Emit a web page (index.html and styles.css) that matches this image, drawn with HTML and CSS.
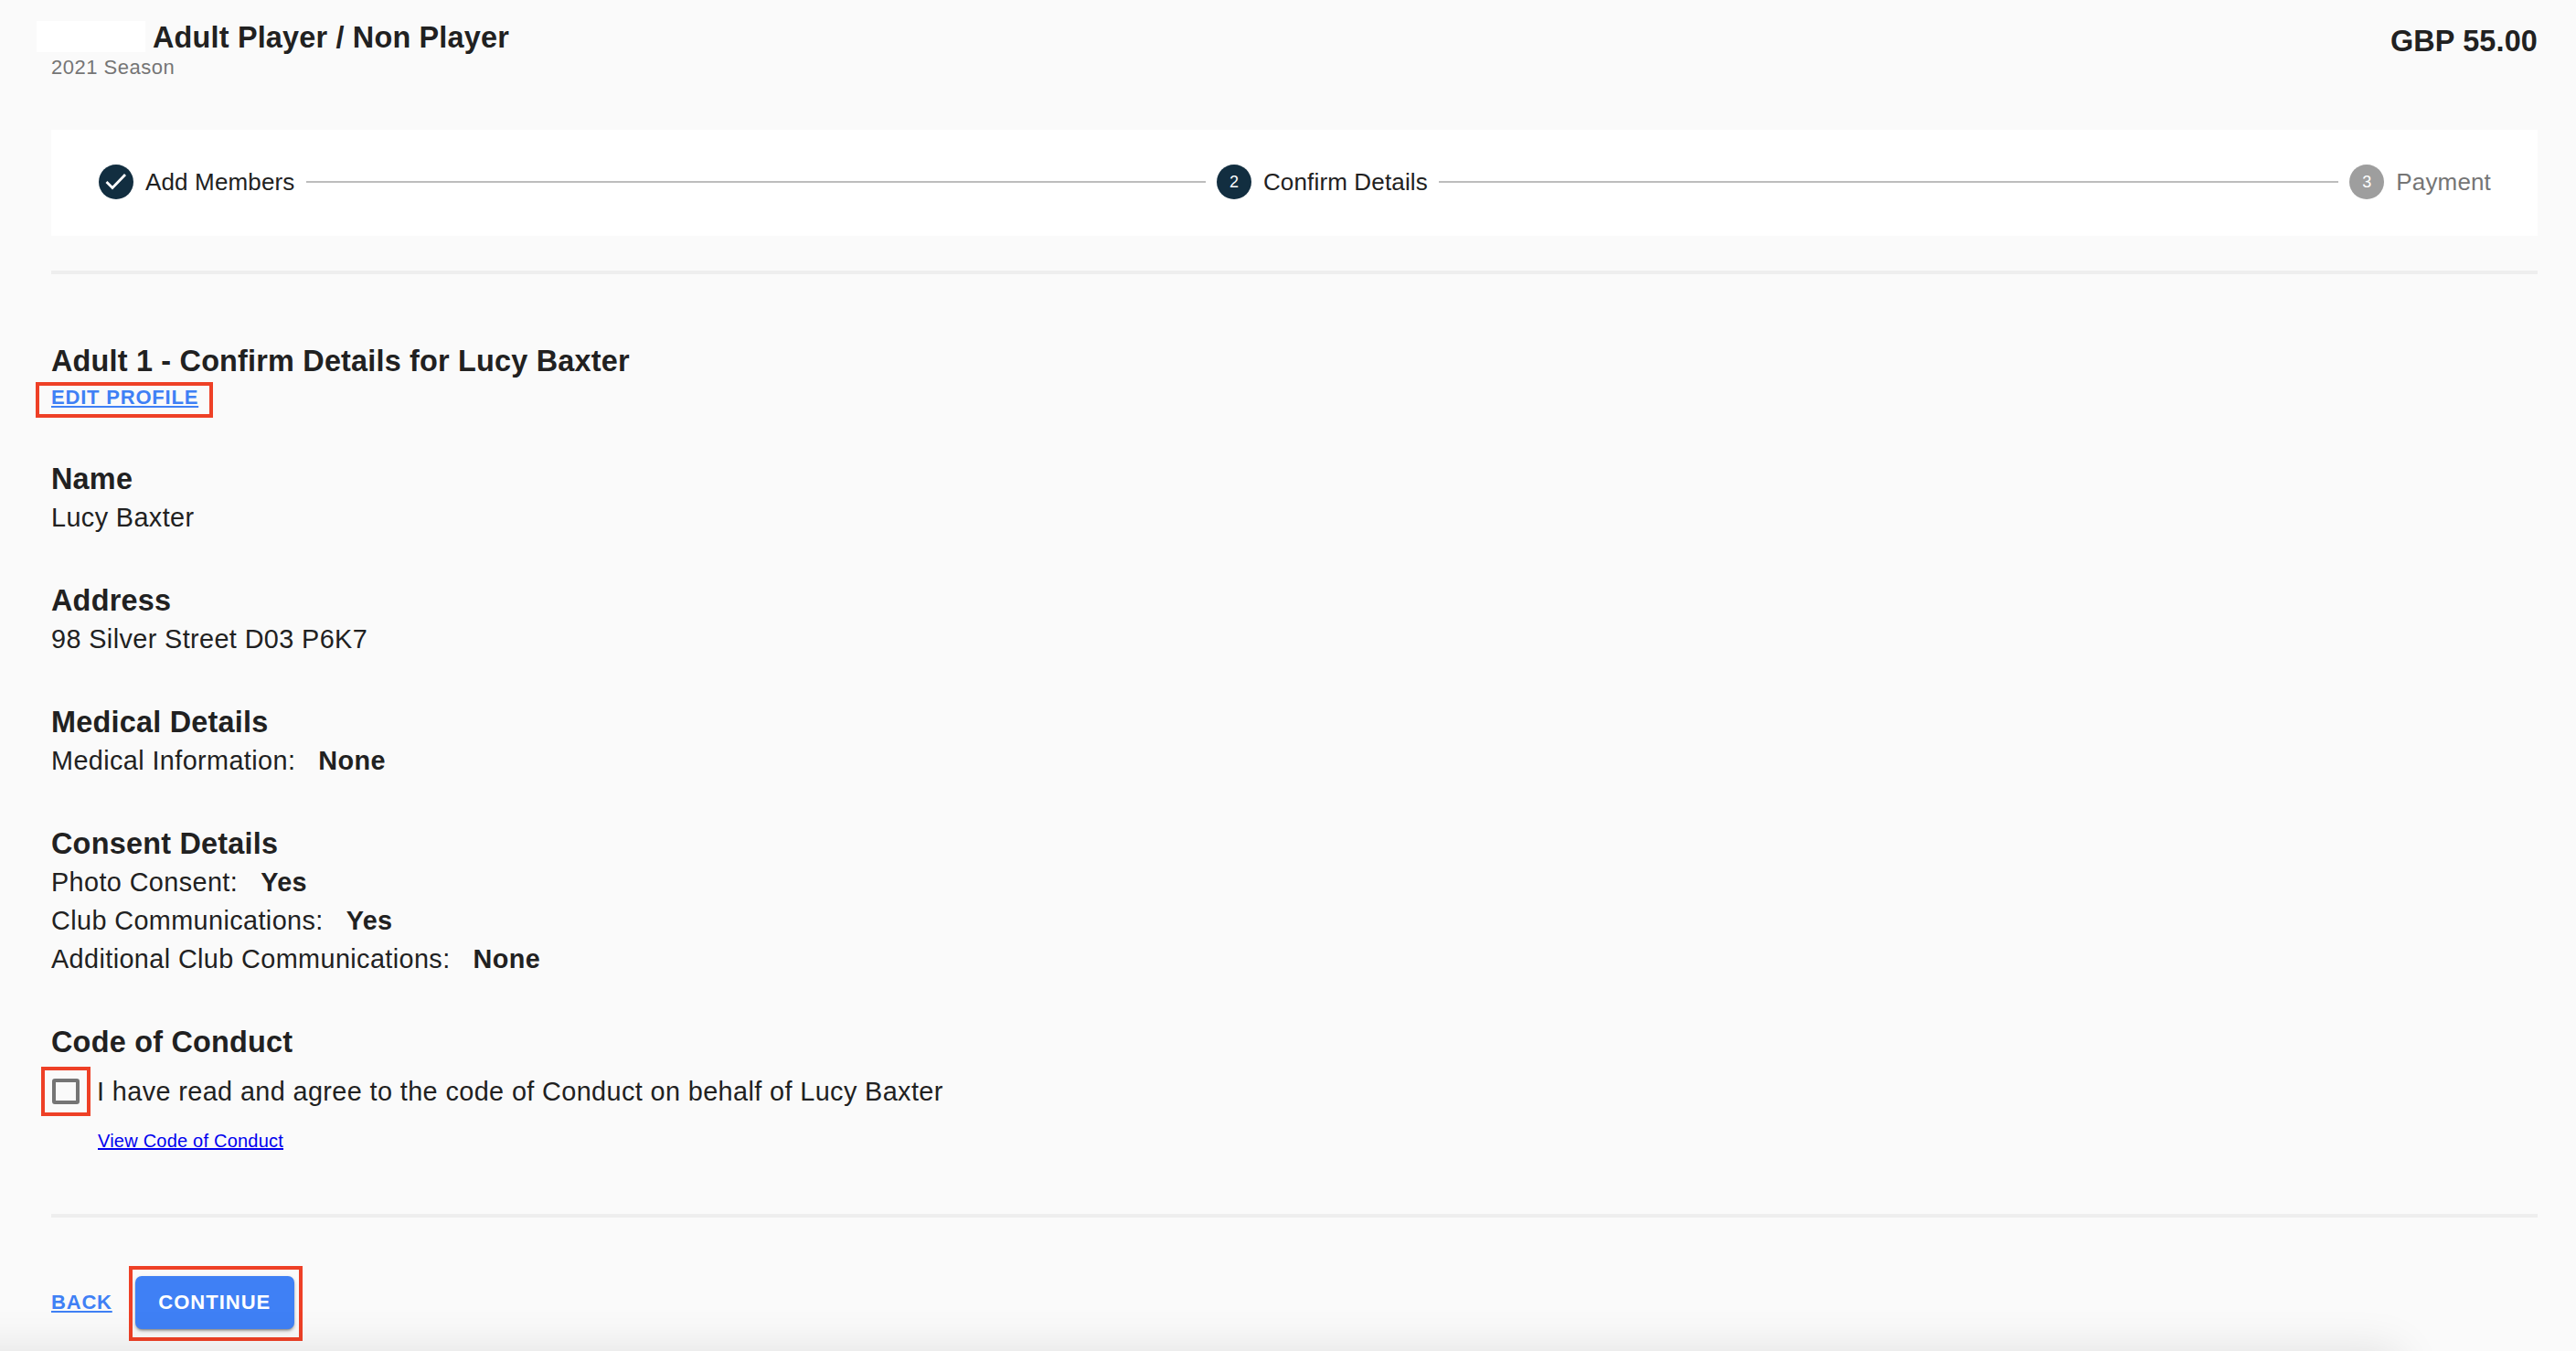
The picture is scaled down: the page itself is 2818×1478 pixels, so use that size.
FILE: index.html
```html
<!DOCTYPE html>
<html lang="en">
<head>
<meta charset="utf-8">
<title>Confirm Details</title>
<link rel="stylesheet" href="styles.css">
</head>
<body>
<main class="page">
  <header class="top">
    <div class="top-left">
      <div class="title-row">
        <div class="logo-blank"></div>
        <h1 class="title">Adult Player / Non Player</h1>
      </div>
      <div class="season">2021 Season</div>
    </div>
    <div class="price">GBP 55.00</div>
  </header>

  <nav class="stepper">
    <div class="step">
      <span class="step-icon">
        <svg viewBox="0 0 38 38" width="38" height="38"><path d="M8.5 19l6.5 6.5L29 11" fill="none" stroke="#fff" stroke-width="2.8"/></svg>
      </span>
      <span class="step-label">Add Members</span>
    </div>
    <div class="step-line"></div>
    <div class="step">
      <span class="step-icon">2</span>
      <span class="step-label">Confirm Details</span>
    </div>
    <div class="step-line"></div>
    <div class="step step-off">
      <span class="step-icon">3</span>
      <span class="step-label">Payment</span>
    </div>
  </nav>
  <div class="rule rule-top"></div>

  <h2 class="lead">Adult 1 - Confirm Details for Lucy Baxter</h2>
  <a class="action-link edit marked" href="#">EDIT PROFILE</a>

  <section class="block block-first">
    <h3 class="head">Name</h3>
    <p class="line">Lucy Baxter</p>
  </section>
  <section class="block">
    <h3 class="head">Address</h3>
    <p class="line">98 Silver Street D03 P6K7</p>
  </section>
  <section class="block">
    <h3 class="head">Medical Details</h3>
    <p class="line">Medical Information:<b class="val">None</b></p>
  </section>
  <section class="block">
    <h3 class="head">Consent Details</h3>
    <p class="line">Photo Consent:<b class="val">Yes</b></p>
    <p class="line">Club Communications:<b class="val">Yes</b></p>
    <p class="line">Additional Club Communications:<b class="val">None</b></p>
  </section>
  <section class="block">
    <h3 class="head">Code of Conduct</h3>
    <div class="agree">
      <span class="check marked"></span>
      <span class="line">I have read and agree to the code of Conduct on behalf of Lucy Baxter</span>
    </div>
    <a class="view" href="#">View Code of Conduct</a>
  </section>

  <div class="rule rule-bottom"></div>
  <div class="actions">
    <a class="action-link" href="#">BACK</a>
    <button class="primary marked" type="button">CONTINUE</button>
  </div>
</main>
<div class="bottom-shadow"></div>
</body>
</html>
```
FILE: styles.css
```css
* { box-sizing: border-box; }
html, body { margin: 0; height: 100%; overflow: hidden; }
body {
  background: #fafafa;
  color: #212121;
  font-family: "Liberation Sans", Arial, sans-serif;
}
.page { padding: 0 42px 0 56px; }
h1, h2, h3, p { margin: 0; }

.top { display: flex; justify-content: space-between; align-items: flex-start; padding-top: 23px; height: 142px; }
.title-row { display: flex; align-items: flex-start; margin-left: -16px; height: 34px; }
.logo-blank { width: 119px; height: 34px; background: #fff; margin-right: 8px; }
.title { font-size: 32.4px; line-height: 36px; font-weight: 700; letter-spacing: .19px; }
.season { font-size: 22px; line-height: 28px; color: #757575; margin-top: 3px; letter-spacing: .5px; }
.price { font-size: 32.4px; line-height: 36px; font-weight: 700; margin-top: 4px; letter-spacing: .15px; }

.stepper { display: flex; align-items: center; height: 116px; background: #fff; padding: 0 51px 2px 52px; }
.step { display: flex; align-items: center; gap: 13px; }
.step-icon { flex: none; width: 38px; height: 38px; border-radius: 50%; background: #122e40; color: #fff; font-size: 18px; display: flex; align-items: center; justify-content: center; }
.step-label { font-size: 26px; letter-spacing: .15px; line-height: 38px; }
.step-line { flex: 1; height: 2px; background: #bdbdbd; margin: 0 12px; }
.step-off .step-icon { background: #9e9e9e; }
.step-off .step-label { color: #757575; }

.rule { height: 4px; background: #eeeeee; }
.rule-top { margin-top: 38px; }
.rule-bottom { margin-top: 67px; }

.lead { font-size: 32.4px; line-height: 40px; font-weight: 700; margin-top: 75px; letter-spacing: .2px; }
.action-link { color: #3f80f5; font-size: 22px; line-height: 26px; font-weight: 700; letter-spacing: .8px; text-decoration: underline; }
.edit { display: inline-block; margin-top: 7px; }

.marked { position: relative; }
.marked::after { content: ""; position: absolute; border: 4px solid #ee4026; pointer-events: none; }
.edit::after { inset: -4px -16px -9px -17px; }

.block { margin-top: 49px; }
.block-first { margin-top: 55px; }
.head { font-size: 32.4px; line-height: 42px; font-weight: 700; letter-spacing: .23px; }
.line { font-size: 28.8px; line-height: 42px; letter-spacing: .4px; }
.val { font-weight: 700; margin-left: 25px; }

.agree { display: flex; align-items: center; gap: 19px; margin-top: 12px; height: 42px; }
.check { flex: none; width: 30px; height: 28px; border: 4px solid #757575; border-radius: 3px; margin-left: 1px; }
.check::after { inset: -17px -16px -17px -16px; }
.view { display: inline-block; margin: 20px 0 0 51px; font-size: 20px; line-height: 26px; color: #0000ee; text-decoration: underline; letter-spacing: .22px; }

.actions { display: flex; align-items: center; gap: 25px; margin-top: 64px; }
.primary {
  width: 174px; height: 58px; border: 0; border-radius: 7px;
  background: #3f80f5; color: #fff;
  font: 700 22px/26px "Liberation Sans", Arial, sans-serif; letter-spacing: 1px;
  box-shadow: 0 3px 2px -2px rgba(0,0,0,.25), 0 2px 3px rgba(0,0,0,.18), 0 2px 5px rgba(0,0,0,.14);
}
.primary::after { inset: -11px -9px -13px -7px; }

.bottom-shadow {
  position: fixed; left: -100px; top: 100%; width: 2725px; height: 100px;
  box-shadow: 0 0 50px rgba(0,0,0,.11);
}
```
